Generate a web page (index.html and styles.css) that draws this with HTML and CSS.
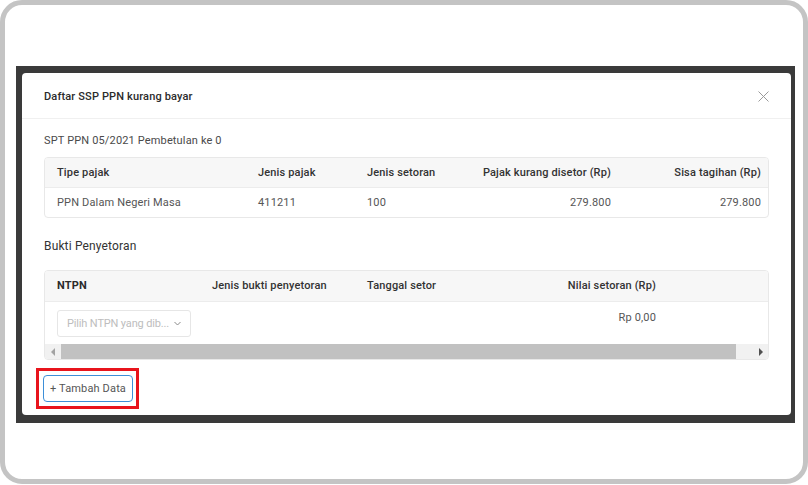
FILE: index.html
```html
<!DOCTYPE html>
<html lang="id">
<head>
    <meta charset="UTF-8">
    <meta name="viewport" content="width=device-width, initial-scale=1.0">
    <title>Daftar SSP PPN kurang bayar</title>
    <link rel="stylesheet" href="styles.css">
</head>
<body>
    <div class="frame">
        <div class="backdrop">
            <div class="modal">
                <div class="modal-header">
                    <div class="modal-title">Daftar SSP PPN kurang bayar</div>
                    <svg class="close" width="11" height="11" viewBox="0 0 11 11">
                        <path d="M0.5 0.5 L10.5 10.5 M10.5 0.5 L0.5 10.5" stroke="#9a9a9a" stroke-width="1" fill="none"/>
                    </svg>
                </div>

                <div class="modal-body">
                    <div class="subtitle">SPT PPN 05/2021 Pembetulan ke 0</div>

                    <div class="table-box">
                        <table class="grid grid-spt">
                            <colgroup>
                                <col style="width: 200px">
                                <col style="width: 109px">
                                <col style="width: 110px">
                                <col style="width: 160px">
                                <col style="width: 144px">
                            </colgroup>
                            <thead>
                                <tr>
                                    <th>Tipe pajak</th>
                                    <th>Jenis pajak</th>
                                    <th>Jenis setoran</th>
                                    <th class="num">Pajak kurang disetor (Rp)</th>
                                    <th class="num last">Sisa tagihan (Rp)</th>
                                </tr>
                            </thead>
                            <tbody>
                                <tr>
                                    <td>PPN Dalam Negeri Masa</td>
                                    <td>411211</td>
                                    <td>100</td>
                                    <td class="num">279.800</td>
                                    <td class="num last">279.800</td>
                                </tr>
                            </tbody>
                        </table>
                    </div>

                    <div class="section-title">Bukti Penyetoran</div>

                    <div class="table-box">
                        <div class="scroll-area">
                            <table class="grid grid-bukti">
                                <colgroup>
                                    <col style="width: 154px">
                                    <col style="width: 155px">
                                    <col style="width: 155px">
                                    <col style="width: 160px">
                                    <col style="width: 117px">
                                </colgroup>
                                <thead>
                                    <tr>
                                        <th class="strong">NTPN</th>
                                        <th>Jenis bukti penyetoran</th>
                                        <th>Tanggal setor</th>
                                        <th class="num">Nilai setoran (Rp)</th>
                                        <th></th>
                                    </tr>
                                </thead>
                                <tbody>
                                    <tr>
                                        <td>
                                            <div class="select">
                                                <span>Pilih NTPN yang dib...</span>
                                                <svg width="7" height="5" viewBox="0 0 7 5">
                                                    <path d="M0.5 1 L3.5 4 L6.5 1" stroke="#8a8a8a" stroke-width="1" fill="none"/>
                                                </svg>
                                            </div>
                                        </td>
                                        <td></td>
                                        <td></td>
                                        <td class="num">Rp 0,00</td>
                                        <td></td>
                                    </tr>
                                </tbody>
                            </table>
                        </div>
                        <div class="scrollbar">
                            <div class="sb-btn"><span class="arrow-left"></span></div>
                            <div class="sb-track"><div class="sb-thumb"></div></div>
                            <div class="sb-btn"><span class="arrow-right"></span></div>
                        </div>
                    </div>

                    <div class="highlight">
                        <button class="btn-add">+ Tambah Data</button>
                    </div>
                </div>
            </div>
        </div>
    </div>
</body>
</html>
```

FILE: styles.css
```css
* {
    box-sizing: border-box;
}

body {
    margin: 0;
    background-color: white;
    font-family: Roboto, 'Liberation Sans', sans-serif;
    font-size: 11px;
    letter-spacing: 0.15px;
    color: #555;
}

.frame {
    width: 808px;
    height: 484px;
    border: 5px solid #c4c4c4;
    border-radius: 22px;
    padding: 61px 8px 0 11px;
}

.backdrop {
    width: 779px;
    height: 357px;
    background-color: #3a3a3a;
    padding: 7px 4px 8px 6px;
}

.modal {
    width: 769px;
    height: 342px;
    background-color: white;
    border-radius: 4px;
}

.modal-header {
    height: 46px;
    display: flex;
    align-items: center;
    justify-content: space-between;
    padding: 0 22px 0 22px;
    border-bottom: 1px solid #f0f0f0;
}

.modal-title {
    font-size: 11px;
    font-weight: 500;
    color: #2b2b2b;
    padding-top: 1px;
}

.close {
    display: block;
    margin-top: 2px;
}

.modal-body {
    padding: 14px 22px 0 22px;
}

.subtitle {
    line-height: 16px;
    color: #4a4a4a;
    margin-bottom: 8px;
}

.table-box {
    border: 1px solid #e8e8e8;
    border-radius: 4px;
    overflow: hidden;
}

.grid {
    border-collapse: collapse;
    table-layout: fixed;
}

.grid-spt {
    width: 723px;
}

.grid th {
    height: 29px;
    background-color: #f7f7f7;
    border-bottom: 1px solid #ececec;
    font-weight: 500;
    color: #333;
    text-align: left;
    padding: 0 13px;
    white-space: nowrap;
}

.grid th:first-child,
.grid td:first-child {
    padding-left: 12px;
}

.grid td {
    height: 30px;
    padding: 0 13px;
    color: #555;
    white-space: nowrap;
}

.grid .num {
    text-align: right;
}

.grid .last {
    padding-right: 7px;
}

.grid th.strong {
    font-weight: 700;
    color: #2b2b2b;
}

.section-title {
    margin-top: 20px;
    margin-bottom: 16px;
    font-size: 12px;
    line-height: 16px;
    color: #333;
}

.scroll-area {
    overflow: hidden;
}

.grid-bukti {
    width: 741px;
}

.grid-bukti th {
    height: 30px;
}

.grid-bukti td {
    height: 43px;
    vertical-align: top;
    padding-top: 8px;
}

.grid-bukti td.num {
    padding-top: 9px;
    line-height: 14px;
}

.select {
    width: 134px;
    height: 27px;
    border: 1px solid #e6e6e6;
    border-radius: 3px;
    display: flex;
    align-items: center;
    gap: 5px;
    padding: 0 0 0 9px;
    color: #bdbdbd;
    letter-spacing: -0.15px;
}

.select svg {
    display: block;
}

.scrollbar {
    height: 15px;
    display: flex;
    background-color: #f1f1f1;
}

.sb-btn {
    width: 15px;
    display: flex;
    align-items: center;
    justify-content: center;
}

.sb-track {
    flex: 1;
    padding: 0 17px 0 1px;
}

.sb-thumb {
    height: 15px;
    background-color: #c1c1c1;
}

.arrow-left {
    width: 0;
    height: 0;
    border-top: 4px solid transparent;
    border-bottom: 4px solid transparent;
    border-right: 4px solid #a3a3a3;
}

.arrow-right {
    width: 0;
    height: 0;
    border-top: 4px solid transparent;
    border-bottom: 4px solid transparent;
    border-left: 4px solid #505050;
}

.highlight {
    display: inline-block;
    margin: 8px 0 0 -8px;
    border: 3px solid #e8141c;
    padding: 4px 3px 4px 4px;
}

.btn-add {
    display: block;
    width: 90px;
    height: 27px;
    padding: 0;
    font-family: Roboto, 'Liberation Sans', sans-serif;
    font-size: 11px;
    letter-spacing: 0.15px;
    color: #555;
    background-color: white;
    border: 1px solid #3d8fd8;
    border-radius: 4px;
    cursor: pointer;
}
```
